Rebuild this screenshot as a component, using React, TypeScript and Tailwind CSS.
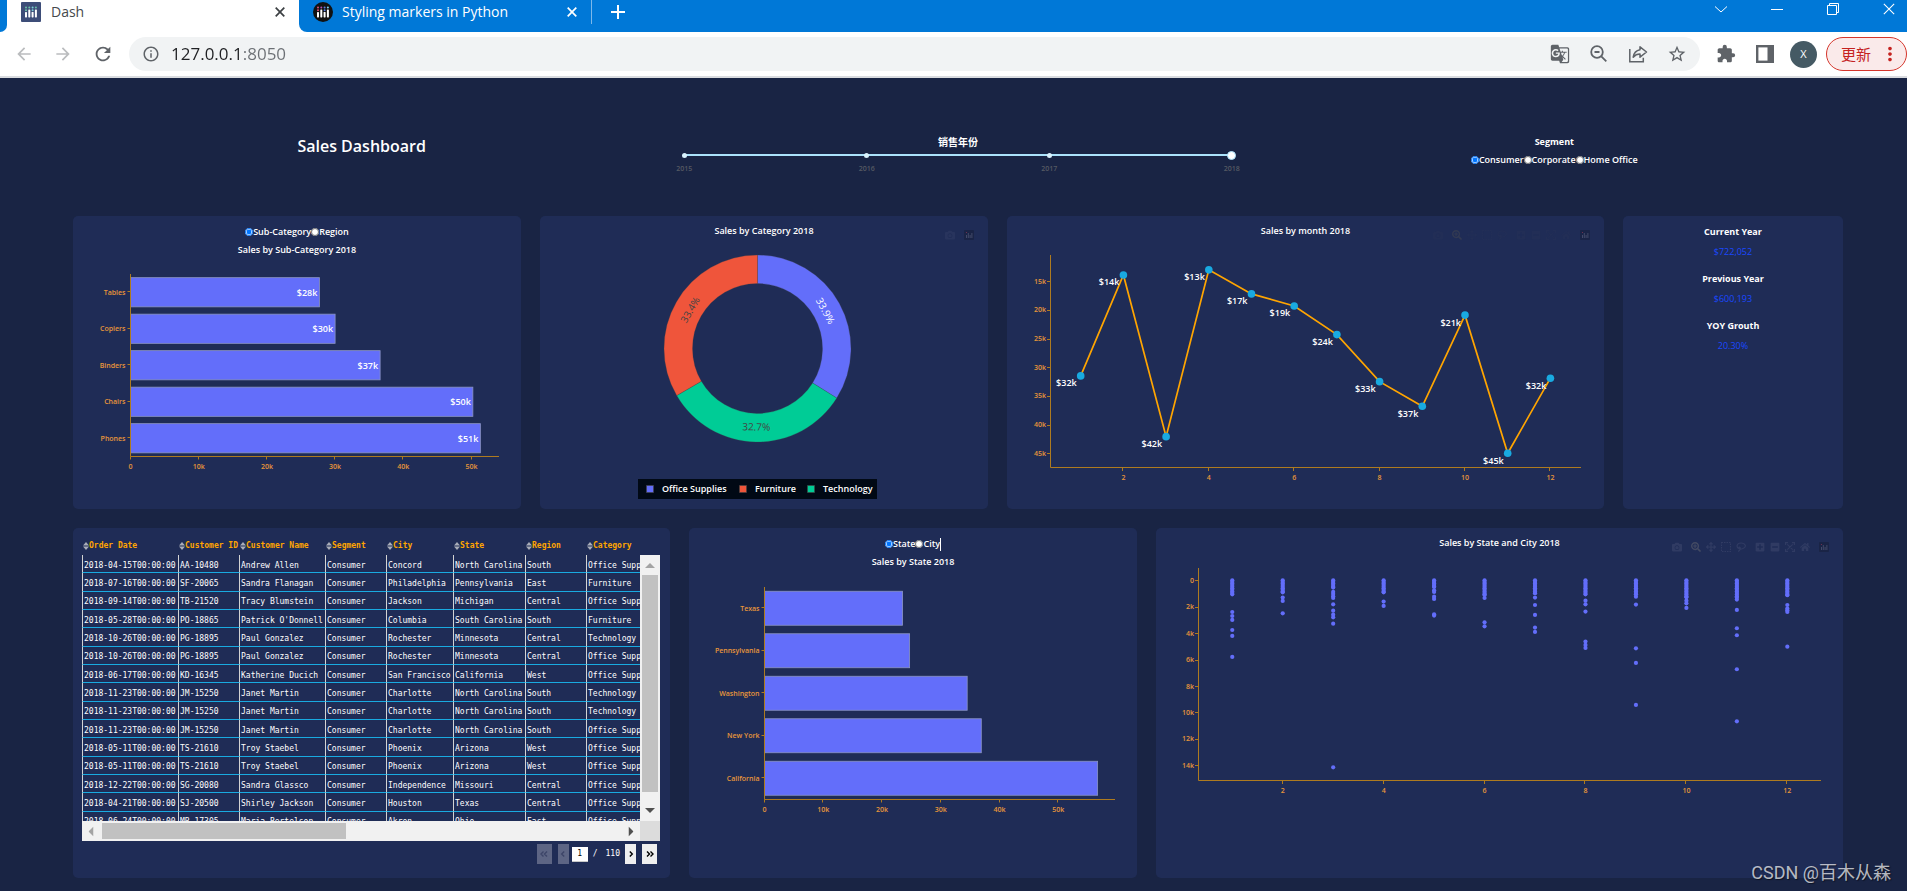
import React, { useState } from "react";
import { FaCamera, FaHome, FaMinusSquare, FaPlusSquare, FaSearchPlus } from "react-icons/fa";
import { FaArrowsUpDownLeftRight } from "react-icons/fa6";
import {
  MdArrowBack,
  MdArrowForward,
  MdExtension,
  MdGTranslate,
  MdInfoOutline,
  MdMoreVert,
  MdRefresh,
  MdStarBorder,
} from "react-icons/md";

const ACCENT = "#636efa";
const AXIS = "#ae7b1f";
const TICK = "#e8963a";

// ---------- data ----------

const subCategories = [
  { name: "Tables", value: 27.7, label: "$28k" },
  { name: "Copiers", value: 30.0, label: "$30k" },
  { name: "Binders", value: 36.6, label: "$37k" },
  { name: "Chairs", value: 50.2, label: "$50k" },
  { name: "Phones", value: 51.3, label: "$51k" },
];

const states = [
  { name: "Texas", value: 23.5 },
  { name: "Pennsylvania", value: 24.7 },
  { name: "Washington", value: 34.5 },
  { name: "New York", value: 36.9 },
  { name: "California", value: 56.7 },
];

const categories = [
  { name: "Office Supplies", share: 33.9, color: "#636efa", text: "#ffffff", legendX: 106 },
  { name: "Technology", share: 32.7, color: "#00cc96", text: "#444444", legendX: 267 },
  { name: "Furniture", share: 33.4, color: "#ef553b", text: "#444444", legendX: 199 },
];

const months = [31.5, 13.9, 42.1, 13.0, 17.2, 19.3, 24.3, 32.5, 36.8, 20.9, 45.0, 31.9];

// sales per month: a dense run from zero up to `dense`, then single orders (all in k)
const orders = [
  { dense: 1.06, rest: [2.4, 2.7, 3.0, 3.76, 4.21, 5.8] },
  { dense: 0.91, rest: [1.31, 1.56, 2.5] },
  { dense: 0.55, rest: [0.88, 1.03, 1.2, 1.34, 1.82, 2.3, 2.6, 2.8, 3.28, 14.15] },
  { dense: 0.91, rest: [1.61, 1.94] },
  { dense: 0.48, rest: [0.76, 0.88, 1.24, 1.41, 2.57, 2.67] },
  { dense: 1.11, rest: [1.34, 3.18, 3.48] },
  { dense: 0.98, rest: [1.31, 1.87, 2.62, 3.58, 3.91] },
  { dense: 1.06, rest: [1.54, 1.82, 2.37, 4.64, 4.89, 5.12] },
  { dense: 1.06, rest: [1.24, 1.84, 5.15, 6.25, 9.43] },
  { dense: 1.29, rest: [1.54, 1.74, 2.09] },
  { dense: 1.31, rest: [1.46, 2.24, 3.63, 4.16, 6.73, 10.67] },
  { dense: 1.13, rest: [1.87, 2.14, 2.27, 2.4, 5.02] },
];

const columns = ["Order Date", "Customer ID", "Customer Name", "Segment", "City", "State", "Region", "Category"];

const rows = [
  ["2018-04-15T00:00:00", "AA-10480", "Andrew Allen", "Consumer", "Concord", "North Carolina", "South", "Office Supplies"],
  ["2018-07-16T00:00:00", "SF-20065", "Sandra Flanagan", "Consumer", "Philadelphia", "Pennsylvania", "East", "Furniture"],
  ["2018-09-14T00:00:00", "TB-21520", "Tracy Blumstein", "Consumer", "Jackson", "Michigan", "Central", "Office Supplies"],
  ["2018-05-28T00:00:00", "PO-18865", "Patrick O'Donnell", "Consumer", "Columbia", "South Carolina", "South", "Furniture"],
  ["2018-10-26T00:00:00", "PG-18895", "Paul Gonzalez", "Consumer", "Rochester", "Minnesota", "Central", "Technology"],
  ["2018-10-26T00:00:00", "PG-18895", "Paul Gonzalez", "Consumer", "Rochester", "Minnesota", "Central", "Office Supplies"],
  ["2018-06-17T00:00:00", "KD-16345", "Katherine Ducich", "Consumer", "San Francisco", "California", "West", "Office Supplies"],
  ["2018-11-23T00:00:00", "JM-15250", "Janet Martin", "Consumer", "Charlotte", "North Carolina", "South", "Technology"],
  ["2018-11-23T00:00:00", "JM-15250", "Janet Martin", "Consumer", "Charlotte", "North Carolina", "South", "Technology"],
  ["2018-11-23T00:00:00", "JM-15250", "Janet Martin", "Consumer", "Charlotte", "North Carolina", "South", "Office Supplies"],
  ["2018-05-11T00:00:00", "TS-21610", "Troy Staebel", "Consumer", "Phoenix", "Arizona", "West", "Office Supplies"],
  ["2018-05-11T00:00:00", "TS-21610", "Troy Staebel", "Consumer", "Phoenix", "Arizona", "West", "Office Supplies"],
  ["2018-12-22T00:00:00", "SG-20080", "Sandra Glassco", "Consumer", "Independence", "Missouri", "Central", "Office Supplies"],
  ["2018-04-21T00:00:00", "SJ-20500", "Shirley Jackson", "Consumer", "Houston", "Texas", "Central", "Office Supplies"],
  ["2018-06-24T00:00:00", "MB-17305", "Maria Bertelson", "Consumer", "Akron", "Ohio", "East", "Office Supplies"],
];

// ---------- browser chrome ----------

function PlotlyIcon({ round }: { round?: boolean }) {
  const colors = round ? ["#e4527a", "#b84fb0", "#5a7fe0", "#7fd0f0"] : ["#6cc3a8", "#6cc3a8", "#7fd0d8", "#6cc3a8"];
  return (
    <svg viewBox="0 0 20 20" className="size-5 shrink-0">
      {round ? <circle cx="10" cy="10" r="10" fill="#111" /> : <rect width="20" height="20" rx="1" fill="#3d4d78" />}
      {[5, 8.3, 11.6, 14.9].map((x, i) => (
        <g key={x}>
          <rect x={x - 1} y="4.4" width="2" height="2" rx="1" fill={colors[i]} />
          <rect x={x - 1} y={i % 2 ? 7.4 : 10} width="2" height={i % 2 ? 8 : 5.4} rx="0.6" fill="#fff" />
          {i % 2 === 0 && <rect x={x - 1} y="7.2" width="2" height="2" rx="1" fill={colors[i]} />}
        </g>
      ))}
    </svg>
  );
}

function Cross({ className }: { className: string }) {
  return (
    <svg viewBox="0 0 10 10" className={className} stroke="currentColor" fill="none">
      <path d="M.7.7l8.6 8.6M9.3.7L.7 9.3" />
    </svg>
  );
}

function TabStrip() {
  return (
    <div className="flex h-8 bg-white">
      <div className="w-[7px] rounded-br-lg bg-[#0078d7]" />
      <div className="flex w-[292px] items-start pt-[2px] pr-[14px] pl-[14px]">
        <PlotlyIcon />
        <span className="ml-[10px] text-[14px] leading-5 text-[#45494d]">Dash</span>
        <button aria-label="Close Dash" className="mt-[5px] ml-auto text-[#3c4043]">
          <Cross className="size-[10px] stroke-[1.7]" />
        </button>
      </div>
      <div className="flex flex-1 items-start rounded-bl-lg bg-[#0078d7] pl-[14px] text-white">
        <div className="flex h-6 w-[279px] border-r border-[#7db8ea] pt-[2px]">
          <PlotlyIcon round />
          <span className="ml-[9px] text-[14px] leading-5">Styling markers in Python</span>
          <button aria-label="Close Styling markers in Python" className="mt-[5px] mr-[14px] ml-auto h-[10px]">
            <Cross className="size-[10px] stroke-[1.7]" />
          </button>
        </div>
        <button aria-label="New tab" className="mt-[5px] ml-[19px]">
          <svg viewBox="0 0 14 14" className="size-[14px]" stroke="currentColor" strokeWidth="2">
            <path d="M7 0v14M0 7h14" />
          </svg>
        </button>
        <div className="mt-[3px] mr-3 ml-auto flex gap-11">
          <button aria-label="Search tabs">
            <svg viewBox="0 0 12 12" className="size-3" fill="none" stroke="currentColor">
              <path d="M0 3.5l6 5.5 6-5.5" />
            </svg>
          </button>
          <button aria-label="Minimize">
            <svg viewBox="0 0 12 12" className="size-3" fill="none" stroke="currentColor">
              <path d="M0 6.5h12" />
            </svg>
          </button>
          <button aria-label="Restore">
            <svg viewBox="0 0 12 12" className="size-3" fill="none" stroke="currentColor">
              <path d="M.5 2.5h9v9h-9zM2.5 2.5v-2h9v9h-2" />
            </svg>
          </button>
          <button aria-label="Close window">
            <Cross className="size-3 stroke-[0.9]" />
          </button>
        </div>
      </div>
    </div>
  );
}

function Toolbar() {
  return (
    <div className="flex h-[46px] items-start border-b-2 border-[#dadce0] bg-white pt-[5px] text-[#5f6368]">
      <div className="flex h-[34px] items-center gap-[19px] pr-[15px] pl-[14px]">
        <button aria-label="Back" className="text-[#babcbe]">
          <MdArrowBack className="size-5" />
        </button>
        <button aria-label="Forward" className="text-[#babcbe]">
          <MdArrowForward className="size-5" />
        </button>
        <button aria-label="Reload">
          <MdRefresh className="size-[22px]" />
        </button>
      </div>
      <div className="flex h-[34px] flex-1 items-center rounded-full bg-[#f1f3f4] pr-[13px] pl-[13px]">
        <MdInfoOutline className="size-[18px] shrink-0" />
        {/* the port is greyed out after the host */}
        <input
          aria-label="Address"
          defaultValue="127.0.0.1:8050"
          className="ml-[11px] min-w-0 flex-1 bg-[linear-gradient(90deg,#202124_72px,#6b6f74_72px)] bg-clip-text text-[17px] leading-5 text-transparent outline-none"
        />
        <div className="flex items-center gap-[19px]">
          <button aria-label="Translate">
            <MdGTranslate className="size-5" />
          </button>
          <button aria-label="Zoom">
            <svg viewBox="0 0 20 20" className="size-5" fill="none" stroke="currentColor" strokeWidth="1.8">
              <circle cx="8" cy="8" r="5.8" />
              <path d="M12.3 12.3l5 5M5.5 8h5" />
            </svg>
          </button>
          <button aria-label="Share">
            <svg viewBox="0 0 20 20" className="size-5" fill="none" stroke="currentColor" strokeWidth="1.5">
              <path d="M1.8 5v12.8h13.5v-4" />
              <path d="M12 2.8l6.5 5.2-6.5 5.2v-3.2c-3 0-5 1-6.8 3.2.6-4 2.8-6.7 6.8-7.4z" strokeLinejoin="round" />
            </svg>
          </button>
          <button aria-label="Bookmark">
            <MdStarBorder className="size-5" />
          </button>
        </div>
      </div>
      <div className="flex h-[34px] items-center pl-4">
        <button aria-label="Extensions">
          <MdExtension className="size-5" />
        </button>
        <button aria-label="Side panel" className="ml-[20px]">
          <svg viewBox="0 0 18 18" className="size-[18px]" fill="none" stroke="currentColor">
            <rect x="1.2" y="1.2" width="15.6" height="15.6" strokeWidth="2.4" />
            <path d="M14 1v16" strokeWidth="5" />
          </svg>
        </button>
        <button className="ml-4 size-[27px] rounded-full bg-[#455a64] text-[11px] text-white">X</button>
        <button className="ml-[9px] flex h-[34px] w-[81px] items-center rounded-full border border-[#d5362c] bg-[#faeaea] pl-[14px] text-[15px] text-[#c5221f]">
          更新
          <MdMoreVert className="ml-[8px] size-[22px]" />
        </button>
      </div>
    </div>
  );
}

// ---------- shared pieces ----------

function Card({ children }: { children: React.ReactNode }) {
  return <section className="relative min-w-0 rounded-[5px] bg-[#1f2c56] pt-[6px]">{children}</section>;
}

function CardTitle({ children }: { children: React.ReactNode }) {
  return <h2 className="text-center text-[9px] leading-[18px] font-semibold text-white">{children}</h2>;
}

interface RadioGroupProps {
  name: string;
  options: string[];
  caret?: boolean;
}

function RadioGroup({ name, options, caret }: RadioGroupProps) {
  const [value, setValue] = useState(options[0]);
  return (
    <div
      role="radiogroup"
      aria-label={name}
      className="flex items-center justify-center pt-px text-[9px] leading-[18px] font-semibold text-white"
    >
      {options.map((o) => (
        <label key={o} className="flex items-center">
          <input
            type="radio"
            name={name}
            checked={value === o}
            onChange={() => setValue(o)}
            className="m-0 size-2 accent-[#0075ff]"
          />
          {o}
        </label>
      ))}
      {caret && <span className="h-[13px] w-px bg-white" />}
    </div>
  );
}

function PlotlyMark() {
  return (
    <svg viewBox="0 0 10 10" className="size-[10px]">
      <rect width="10" height="10" rx="1" fill="#1a2446" />
      <path d="M2.5 5v3M4.3 3v5M6.1 5v3M7.9 3v5" stroke="#434a6a" strokeWidth="1" />
      <circle cx="2.5" cy="2.5" r=".6" fill="#7a3350" />
    </svg>
  );
}

function ModeBar({ full, className }: { full?: boolean; className: string }) {
  return (
    <div className={`absolute top-[14px] right-[14px] flex gap-[9px] ${className}`}>
      <FaCamera className="size-[10px]" />
      {full && (
        <>
          <div className="flex gap-[5px]">
            <FaSearchPlus className="size-[10px] brightness-125 saturate-50" />
            <FaArrowsUpDownLeftRight className="size-[10px]" />
            <svg viewBox="0 0 10 10" className="size-[10px]" fill="none" stroke="currentColor">
              <path d="M.5.5h9v9h-9z" strokeWidth="1.2" strokeDasharray="1.5 1" />
            </svg>
            <svg viewBox="0 0 10 10" className="size-[10px]" fill="none" stroke="currentColor" strokeWidth="1.2">
              <path d="M3 6.8C.2 5.500.2 1 5 1s5.500 4 2.500 5.200S3.500 7.500 3 6s1.500-1.200 1.300.5S3.500 9 2 9.400" />
            </svg>
          </div>
          <div className="flex gap-[5px]">
            <FaPlusSquare className="size-[10px]" />
            <FaMinusSquare className="size-[10px]" />
            <svg viewBox="0 0 10 10" className="size-[10px]" fill="none" stroke="currentColor" strokeWidth="1.2">
              <path d="M.6 3V.6H3M7 .6h2.4V3M9.4 7v2.4H7M3 9.4H.6V7M2.3 2.3l5.4 5.4M7.7 2.3L2.3 7.7" />
            </svg>
            <FaHome className="size-[10px]" />
          </div>
        </>
      )}
      <PlotlyMark />
    </div>
  );
}

function Tick({ x, y, anchor, children }: { x: number; y: number; anchor: "middle" | "end"; children: React.ReactNode }) {
  return (
    <text x={x} y={y} textAnchor={anchor} dominantBaseline="central" fill={TICK} className="text-[7px] font-semibold">
      {children}
    </text>
  );
}

// ---------- charts ----------

type Bar = { name: string; value: number; label?: string };

interface BarChartProps {
  bars: Bar[];
  height: number;
  left: number;
  right: number;
  top: number;
  bottom: number;
  unit: number; // px per 10k
}

function BarChart({ bars, height, left, right, top, bottom, unit }: BarChartProps) {
  const step = (bottom - top) / bars.length;
  return (
    <svg viewBox={`0 0 448 ${height}`} className="block h-auto w-full">
      {bars.map((b, i) => {
        const w = (b.value * unit) / 10;
        const mid = top + step * (i + 0.5);
        return (
          <g key={b.name}>
            <rect
              x={left}
              y={mid - step * 0.4}
              width={w}
              height={step * 0.8}
              fill={ACCENT}
              stroke="#8a94c4"
              strokeWidth="0.8"
            />
            <path d={`M${left - 3} ${Math.round(mid) - 0.5}h3`} stroke={AXIS} />
            <Tick x={left - 5} y={mid} anchor="end">
              {b.name}
            </Tick>
            {b.label && (
              <text x={left + w - 2} y={mid} textAnchor="end" dominantBaseline="central" fill="#fff" className="text-[9px] font-semibold">
                {b.label}
              </text>
            )}
          </g>
        );
      })}
      <path d={`M${left} ${top}V${bottom}H${right}`} fill="none" stroke={AXIS} />
      {[0, 1, 2, 3, 4, 5].map((t) => (
        <g key={t}>
          <path d={`M${Math.round(left + t * unit) - 0.5} ${bottom}v3`} stroke={AXIS} />
          <Tick x={left + t * unit} y={bottom + 10} anchor="middle">
            {t ? `${t}0k` : "0"}
          </Tick>
        </g>
      ))}
    </svg>
  );
}

function DonutChart() {
  const cx = 217.5;
  const cy = 107.5;
  const outer = 93.5;
  const inner = 65;
  const at = (r: number, deg: number) => {
    const a = ((deg - 90) * Math.PI) / 180;
    return [cx + r * Math.cos(a), cy + r * Math.sin(a)];
  };
  let start = 0;
  const slices = categories.map((c) => {
    const end = start + c.share * 3.6;
    const mid = (start + end) / 2;
    const [x1, y1] = at(outer, start);
    const [x2, y2] = at(outer, end);
    const [x3, y3] = at(inner, end);
    const [x4, y4] = at(inner, start);
    start = end;
    return {
      ...c,
      mid,
      d: `M${x1} ${y1}A${outer} ${outer} 0 0 1 ${x2} ${y2}L${x3} ${y3}A${inner} ${inner} 0 0 0 ${x4} ${y4}Z`,
    };
  });

  return (
    <svg viewBox="0 0 448 268" className="mt-px block h-auto w-full">
      {slices.map((s) => {
        const [tx, ty] = at(78, s.mid);
        const rotate = s.mid < 90 ? s.mid : s.mid > 270 ? s.mid - 360 : s.mid - 180;
        return (
          <g key={s.name}>
            <path d={s.d} fill={s.color} stroke="#444" strokeOpacity="0.5" strokeWidth="0.5" />
            <text
              x={tx}
              y={ty}
              transform={`rotate(${rotate} ${tx} ${ty})`}
              textAnchor="middle"
              dominantBaseline="central"
              fill={s.text}
              className="text-[10px]"
            >
              {s.share}%
            </text>
          </g>
        );
      })}
      <rect x="98" y="238" width="239" height="20" fill="#010915" />
      {categories.map((c) => (
        <g key={c.name}>
          <rect x={c.legendX + 0.5} y="244.5" width="7" height="7" fill={c.color} stroke="#444" strokeOpacity="0.6" />
          <text x={c.legendX + 16} y="247" dominantBaseline="central" fill="#fff" className="text-[9px] font-semibold">
            {c.name}
          </text>
        </g>
      ))}
    </svg>
  );
}

function MonthChart() {
  const x = (m: number) => 31 + m * 42.7;
  const y = (v: number) => 40.3 + (v - 15) * 5.733;
  const points = months.map((v, i) => `${x(i + 1)},${y(v)}`).join(" ");
  return (
    <svg viewBox="0 0 597 268" className="mt-px block h-auto w-full">
      <path d="M43.5 14v212.5H574" fill="none" stroke={AXIS} />
      {[15, 20, 25, 30, 35, 40, 45].map((t) => (
        <g key={t}>
          <path d={`M40 ${Math.round(y(t)) + 0.5}h3.5`} stroke={AXIS} />
          <Tick x={39} y={y(t)} anchor="end">
            {t}k
          </Tick>
        </g>
      ))}
      {[2, 4, 6, 8, 10, 12].map((t) => (
        <g key={t}>
          <path d={`M${Math.round(x(t)) - 0.5} 226v4`} stroke={AXIS} />
          <Tick x={x(t)} y={236} anchor="middle">
            {t}
          </Tick>
        </g>
      ))}
      <polyline points={points} fill="none" stroke="orange" strokeWidth="1.7" />
      {months.map((v, i) => (
        <g key={i}>
          <circle cx={x(i + 1)} cy={y(v)} r="3.8" fill="#19aae1" />
          <text
            x={x(i + 1) - 4}
            y={y(v) + 7}
            textAnchor="end"
            dominantBaseline="central"
            fill="#fff"
            className="text-[9px] font-semibold"
          >
            ${Math.round(v)}k
          </text>
        </g>
      ))}
    </svg>
  );
}

function ScatterChart() {
  const x = (m: number) => 25.8 + m * 50.46;
  const y = (v: number) => 27.3 + v * 13.215;
  return (
    <svg viewBox="0 0 687 325" className="mt-px block h-auto w-full">
      <path d="M42.5 15v212.5H665" fill="none" stroke={AXIS} />
      {[0, 2, 4, 6, 8, 10, 12, 14].map((t) => (
        <g key={t}>
          <path d={`M39 ${Math.round(y(t)) + 0.5}h3.5`} stroke={AXIS} />
          <Tick x={38} y={y(t)} anchor="end">
            {t ? `${t}k` : "0"}
          </Tick>
        </g>
      ))}
      {[2, 4, 6, 8, 10, 12].map((t) => (
        <g key={t}>
          <path d={`M${Math.round(x(t)) - 0.5} 227v4`} stroke={AXIS} />
          <Tick x={x(t)} y={237} anchor="middle">
            {t}
          </Tick>
        </g>
      ))}
      {orders.map((o, i) => {
        const run = [];
        for (let v = 0; v <= o.dense; v += 0.12) run.push(v);
        return [...run, o.dense, ...o.rest].map((v, j) => (
          <circle key={`${i}-${j}`} cx={x(i + 1)} cy={y(v)} r="2.1" fill={ACCENT} />
        ));
      })}
    </svg>
  );
}

// ---------- orders table ----------

function SortIcon() {
  return (
    <svg viewBox="0 0 6 8" className="h-2 w-[6px] shrink-0" fill="#a9adb8">
      <path d="M3 0l3 3.500H0zM3 8L0 4.500h6z" />
    </svg>
  );
}

function Arrow({ className }: { className: string }) {
  return (
    <svg viewBox="0 0 10 5" className={`h-[5px] w-[10px] shrink-0 ${className}`} fill="currentColor">
      <path d="M5 0l5 5H0z" />
    </svg>
  );
}

function Chevrons({ double, left }: { double?: boolean; left?: boolean }) {
  return (
    <svg viewBox="0 0 8 6" className={left ? "h-[6px] w-2 rotate-180" : "h-[6px] w-2"} fill="none" stroke="currentColor" strokeWidth="1.4">
      {double ? <path d="M1 .5L3.5 3 1 5.5M4.5.5L7 3 4.5 5.5" /> : <path d="M2.8.5L5.3 3 2.8 5.5" />}
    </svg>
  );
}

function OrdersTable() {
  return (
    <div className="pt-[3px] pr-[10px] pl-[9px] font-['DejaVu_Sans_Mono',monospace] text-[8px] text-white">
      <div className="flex">
        <div className="h-[284px] min-w-0 flex-1 overflow-hidden">
          <table className="h-[293px] w-[640px] table-fixed border-separate border-spacing-0 whitespace-nowrap">
            <colgroup>
              <col className="w-[96px]" />
              <col className="w-[61px]" />
              <col className="w-[86px]" />
              <col className="w-[61px]" />
              <col className="w-[67px]" />
              <col className="w-[72px]" />
              <col className="w-[61px]" />
              <col />
            </colgroup>
            <thead>
              <tr className="h-[18px]">
                {columns.map((c) => (
                  <th key={c} className="overflow-hidden p-0 pl-px text-left font-bold text-[orange]">
                    <span className="flex items-center">
                      <SortIcon />
                      {c}
                    </span>
                  </th>
                ))}
              </tr>
            </thead>
            <tbody>
              {rows.map((r, i) => (
                <tr key={i}>
                  {r.map((cell, j) => (
                    <td
                      key={j}
                      className="overflow-hidden border-b border-l border-b-[#19aae1] border-l-[#d3d3d3] p-0 pt-[4px] pl-px leading-3"
                    >
                      {cell}
                    </td>
                  ))}
                </tr>
              ))}
            </tbody>
          </table>
        </div>
        <div className="mt-[18px] flex w-5 flex-col items-center justify-between bg-[#f1f1f1] py-2">
          <Arrow className="text-[#a3a3a3]" />
          <div className="mt-[7px] mb-4 w-4 flex-1 bg-[#c1c1c1]" />
          <Arrow className="rotate-180 text-[#505050]" />
        </div>
      </div>
      <div className="flex h-5">
        <div className="flex flex-1 items-center bg-[#f1f1f1] px-[4px]">
          <Arrow className="-rotate-90 text-[#a3a3a3]" />
          <div className="ml-[6px] h-4 w-[244px] bg-[#c1c1c1]" />
          <Arrow className="ml-auto rotate-90 text-[#505050]" />
        </div>
        <div className="w-5 bg-[#dcdcdc]" />
      </div>
      <div className="mt-[3px] flex h-5 items-center justify-end pr-[3px]">
        <button disabled aria-label="First page" className="flex h-5 w-[15px] items-center justify-center bg-[#5d6584] text-[#3d4568]">
          <Chevrons double left />
        </button>
        <button disabled aria-label="Previous page" className="ml-[6px] flex h-5 w-[11px] items-center justify-center bg-[#5d6584] text-[#3d4568]">
          <Chevrons left />
        </button>
        <input
          aria-label="Current page"
          defaultValue="1"
          className="ml-[3px] h-[15px] w-4 border-b border-[#c8c8c8] bg-white text-center text-black"
        />
        <span className="ml-[5px]">/</span>
        <span className="ml-[8px]">110</span>
        <button aria-label="Next page" className="ml-[5px] flex h-5 w-[11px] items-center justify-center bg-[#efefef] text-black">
          <Chevrons />
        </button>
        <button aria-label="Last page" className="ml-[6px] flex h-5 w-[15px] items-center justify-center bg-[#efefef] text-black">
          <Chevrons double />
        </button>
      </div>
    </div>
  );
}

// ---------- header ----------

function YearSlider() {
  const [year, setYear] = useState(3);
  return (
    <div className="px-[11px]">
      <label htmlFor="year" className="block text-center text-[10px] leading-[18px] font-semibold text-white">
        销售年份
      </label>
      <div className="relative h-[9px]">
        <div className="absolute inset-x-[4px] top-[3px] h-[2px] bg-[#abe2fb]" />
        <div className="absolute inset-x-[2px] top-[2px] flex justify-between">
          {[0, 1, 2, 3].map((i) => (
            <span key={i} className="size-[5px] rounded-full bg-[#d9f2fd]" />
          ))}
        </div>
        <input
          id="year"
          type="range"
          min={0}
          max={3}
          value={year}
          onChange={(e) => setYear(Number(e.target.value))}
          className="absolute inset-0 m-0 h-[9px] w-full appearance-none bg-transparent [&::-webkit-slider-thumb]:size-[9px] [&::-webkit-slider-thumb]:appearance-none [&::-webkit-slider-thumb]:rounded-full [&::-webkit-slider-thumb]:border [&::-webkit-slider-thumb]:border-[#abe2fb] [&::-webkit-slider-thumb]:bg-white"
        />
      </div>
      <div className="-mx-[16px] mt-[4px] flex justify-between text-center text-[7px] leading-[10px] font-semibold text-[#565a63]">
        {[2015, 2016, 2017, 2018].map((y) => (
          <span key={y} className="w-10">
            {y}
          </span>
        ))}
      </div>
    </div>
  );
}

const stats = [
  ["Current Year", "$722,052"],
  ["Previous Year", "$600,193"],
  ["YOY Grouth", "20.30%"],
];

export default function App() {
  return (
    <div className="relative min-h-screen overflow-hidden bg-[#192444] font-['Open_Sans','Noto_Sans_CJK_SC',sans-serif]">
      <TabStrip />
      <Toolbar />
      <main className="pr-16 pb-[13px] pl-[73px]">
        <header className="grid grid-cols-3 gap-[19px] pt-[55px] pb-[42px]">
          <h1 className="text-center text-base leading-[26px] font-semibold text-white">Sales Dashboard</h1>
          <YearSlider />
          <div>
            <h2 className="text-center text-[9px] leading-[17px] font-bold text-white">Segment</h2>
            <RadioGroup name="segment" options={["Consumer", "Corporate", "Home Office"]} />
          </div>
        </header>

        <div className="grid grid-cols-[448fr_448fr_597fr_220fr] gap-[19px]">
          <Card>
            <RadioGroup name="dimension" options={["Sub-Category", "Region"]} />
            <CardTitle>Sales by Sub-Category 2018</CardTitle>
            <BarChart bars={subCategories} height={250} left={57.5} right={426} top={15} bottom={197.5} unit={68.2} />
          </Card>
          <Card>
            <CardTitle>Sales by Category 2018</CardTitle>
            <ModeBar className="text-[#28345d]" />
            <DonutChart />
          </Card>
          <Card>
            <CardTitle>Sales by month 2018</CardTitle>
            <ModeBar full className="text-[#222e56]" />
            <MonthChart />
          </Card>
          <Card>
            {stats.map(([name, value]) => (
              <dl key={name} className="pt-px pb-2 text-center text-[9px] leading-[18px]">
                <dt className="font-bold text-white">{name}</dt>
                <dd className="mt-[2px] text-[#1a48ff]">{value}</dd>
              </dl>
            ))}
          </Card>
        </div>

        <div className="mt-[19px] grid grid-cols-[597fr_448fr_687fr] gap-[19px]">
          <Card>
            <OrdersTable />
          </Card>
          <Card>
            <RadioGroup name="place" options={["State", "City"]} caret />
            <CardTitle>Sales by State 2018</CardTitle>
            <BarChart bars={states} height={307} left={75.5} right={426} top={16} bottom={228.5} unit={58.75} />
          </Card>
          <Card>
            <CardTitle>Sales by State and City 2018</CardTitle>
            <ModeBar full className="text-[#303b63]" />
            <ScatterChart />
          </Card>
        </div>
      </main>
      <p className="absolute right-[16px] bottom-[6px] font-['Roboto','Noto_Sans_CJK_SC',sans-serif] text-[18px] leading-6 text-white/70 [text-shadow:1px_1px_1px_rgba(0,0,0,0.5)]">
        CSDN @百木从森
      </p>
    </div>
  );
}
